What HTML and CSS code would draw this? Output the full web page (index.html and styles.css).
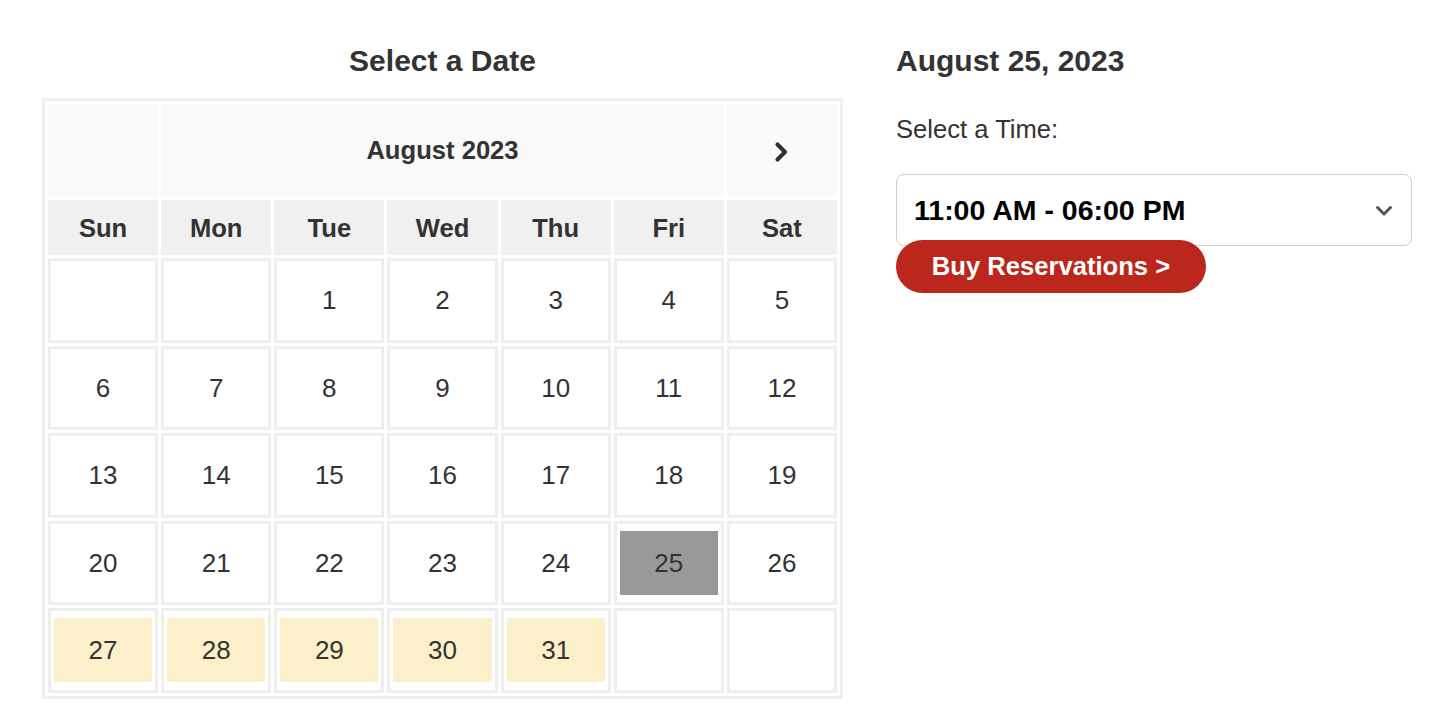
FILE: index.html
```html
<!DOCTYPE html>
<html lang="en">
<head>
<meta charset="utf-8">
<title>Select a Date</title>
<link rel="stylesheet" href="styles.css">
</head>
<body>
<div class="page">
  <section class="cal-col">
    <h2 class="heading center">Select a Date</h2>
    <table class="cal">
      <tr class="cal-head">
        <td class="nav"></td>
        <td class="month" colspan="5">August 2023</td>
        <td class="nav">
          <svg class="next" width="15" height="22" viewBox="0 0 15 22"><path d="M3.5 3.5 L11 11 L3.5 18.5" fill="none" stroke="#333" stroke-width="4.2" stroke-linecap="round" stroke-linejoin="round"/></svg>
        </td>
      </tr>
      <tr class="dow">
        <th>Sun</th><th>Mon</th><th>Tue</th><th>Wed</th><th>Thu</th><th>Fri</th><th>Sat</th>
      </tr>
      <tr>
        <td></td><td></td>
        <td><span class="d">1</span></td><td><span class="d">2</span></td><td><span class="d">3</span></td><td><span class="d">4</span></td><td><span class="d">5</span></td>
      </tr>
      <tr>
        <td><span class="d">6</span></td><td><span class="d">7</span></td><td><span class="d">8</span></td><td><span class="d">9</span></td><td><span class="d">10</span></td><td><span class="d">11</span></td><td><span class="d">12</span></td>
      </tr>
      <tr>
        <td><span class="d">13</span></td><td><span class="d">14</span></td><td><span class="d">15</span></td><td><span class="d">16</span></td><td><span class="d">17</span></td><td><span class="d">18</span></td><td><span class="d">19</span></td>
      </tr>
      <tr>
        <td><span class="d">20</span></td><td><span class="d">21</span></td><td><span class="d">22</span></td><td><span class="d">23</span></td><td><span class="d">24</span></td><td><span class="d selected">25</span></td><td><span class="d">26</span></td>
      </tr>
      <tr>
        <td><span class="d avail">27</span></td><td><span class="d avail">28</span></td><td><span class="d avail">29</span></td><td><span class="d avail">30</span></td><td><span class="d avail">31</span></td><td></td><td></td>
      </tr>
    </table>
  </section>
  <section class="time-col">
    <h2 class="heading">August 25, 2023</h2>
    <div class="label">Select a Time:</div>
    <div class="select">
      <span class="select-text">11:00 AM - 06:00 PM</span>
      <svg class="caret" width="18" height="12" viewBox="0 0 18 12"><path d="M2.5 2.5 L9 9 L15.5 2.5" fill="none" stroke="#555" stroke-width="3" stroke-linecap="round" stroke-linejoin="round"/></svg>
    </div>
    <div class="btn">Buy Reservations &gt;</div>
  </section>
</div>
</body>
</html>
```

FILE: styles.css
```css
html, body {
  margin: 0;
  padding: 0;
  background: #fff;
}

body {
  font-family: "Liberation Sans", Arial, Helvetica, sans-serif;
  color: #333;
}

.page {
  display: flex;
  align-items: flex-start;
  gap: 53px;
  padding: 43px 0 0 42px;
}

.cal-col {
  width: 801px;
}

.heading {
  margin: 0;
  font-size: 30px;
  line-height: 36px;
  font-weight: bold;
  color: #333;
}

.center {
  text-align: center;
}

.cal {
  margin-top: 19px;
  width: 801px;
  table-layout: fixed;
  border-collapse: separate;
  border-spacing: 3px;
  border: 3px solid #eee;
}

.cal td, .cal th {
  box-sizing: border-box;
  padding: 0;
  text-align: center;
  vertical-align: middle;
}

.cal-head td {
  background: #f9f9f9;
  height: 93px;
}

.month {
  font-size: 25.6px;
  font-weight: bold;
  color: #333;
}

.next {
  display: block;
  margin: 2px auto 0;
}

.dow th {
  background: #f0f0f0;
  height: 55px;
  padding-top: 2px;
  font-size: 25.6px;
  font-weight: bold;
  color: #333;
}

.cal tr:not(.cal-head):not(.dow) td {
  height: 84.5px;
  border: 3px solid #eee;
  padding: 7px 3px;
  background: #fff;
}

.d {
  display: block;
  height: 64px;
  line-height: 64px;
  font-size: 26px;
  color: #333;
}

.selected {
  background: #999;
}

.avail {
  background: #fcf0ca;
}

.time-col {
  width: 516px;
}

.label {
  margin-top: 35px;
  font-size: 25.6px;
  line-height: 30px;
  color: #333;
}

.select {
  margin-top: 30px;
  box-sizing: border-box;
  height: 72px;
  border: 1px solid #ccc;
  border-radius: 8px;
  display: flex;
  align-items: center;
  justify-content: space-between;
  padding: 0 18px 0 17px;
  background: #fff;
}

.select-text {
  font-size: 28.5px;
  font-weight: bold;
  color: #000;
}

.caret {
  display: block;
  margin-top: 2px;
}

.btn {
  position: relative;
  display: inline-block;
  margin-top: -6px;
  width: 310px;
  height: 53px;
  line-height: 53px;
  box-sizing: border-box;
  text-align: center;
  border-radius: 27px;
  background: #bb271d;
  color: #fff;
  font-size: 25.6px;
  font-weight: bold;
}
```
